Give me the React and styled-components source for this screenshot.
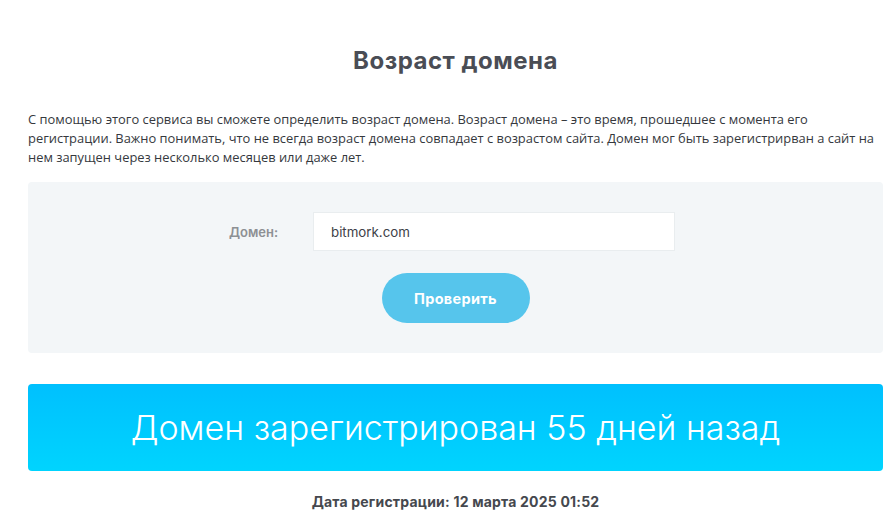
import React from 'react'
import styled, { createGlobalStyle } from 'styled-components'

const GlobalStyle = createGlobalStyle`
  html, body {
    margin: 0;
    padding: 0;
    background: #fff;
  }
  body {
    font-family: 'Open Sans', 'Liberation Sans', sans-serif;
    color: #3c3f45;
  }
`

const Page = styled.div`
  width: 855px;
  padding: 44px 0 0 28px;
`

const Title = styled.h1`
  margin: 0;
  text-align: center;
  font-family: 'Inter', 'DejaVu Sans', sans-serif;
  font-weight: 700;
  font-size: 24px;
  letter-spacing: 0.5px;
  line-height: 34px;
  color: #4a4d55;
`

const Intro = styled.p`
  margin: 32px 0 0;
  font-size: 12.9px;
  line-height: 19px;
  color: #35383d;
`

const Panel = styled.div`
  margin-top: 15px;
  height: 171px;
  box-sizing: border-box;
  padding-top: 30px;
  background: #f3f6f8;
  border-radius: 4px;
  display: flex;
  flex-direction: column;
  align-items: center;
`

const Field = styled.div`
  display: flex;
  align-items: center;
  margin-right: 7px;
`

const Label = styled.label`
  width: 84px;
  font-family: 'Inter', 'DejaVu Sans', sans-serif;
  font-weight: 600;
  font-size: 13px;
  color: #8d9094;
`

const Input = styled.input`
  width: 362px;
  height: 39px;
  box-sizing: border-box;
  border: 1px solid #e9edef;
  background: #fff;
  padding: 0 17px;
  font-family: 'Inter', 'DejaVu Sans', sans-serif;
  font-size: 13.3px;
  color: #3e4148;
  outline: none;
`

const Button = styled.button`
  margin-top: 22px;
  width: 148px;
  height: 50px;
  border: 0;
  border-radius: 25px;
  background: #56c5ec;
  color: #fff;
  font-family: 'Inter', 'DejaVu Sans', sans-serif;
  font-weight: 700;
  font-size: 14.5px;
  letter-spacing: 0.3px;
  cursor: pointer;
`

const Result = styled.div`
  margin-top: 31px;
  height: 87px;
  border-radius: 4px;
  background: linear-gradient(180deg, #00c0fe 0%, #00d4fe 100%);
  display: flex;
  align-items: center;
  justify-content: center;
  color: #fff;
  font-family: 'Inter', 'DejaVu Sans', sans-serif;
  font-weight: 300;
  font-size: 34px;
`

const RegDate = styled.div`
  margin-top: 22px;
  text-align: center;
  font-family: 'Inter', 'DejaVu Sans', sans-serif;
  font-weight: 700;
  font-size: 14px;
  letter-spacing: 0.2px;
  color: #45484e;
`

export default function App() {
  return (
    <>
      <GlobalStyle />
      <Page>
        <Title>Возраст домена</Title>
        <Intro>
          С помощью этого сервиса вы сможете определить возраст домена. Возраст
          домена – это время, прошедшее с момента его регистрации. Важно
          понимать, что не всегда возраст домена совпадает с возрастом сайта.
          Домен мог быть зарегистрирван а сайт на нем запущен через несколько
          месяцев или даже лет.
        </Intro>
        <Panel>
          <Field>
            <Label htmlFor="domain">Домен:</Label>
            <Input id="domain" defaultValue="bitmork.com" />
          </Field>
          <Button>Проверить</Button>
        </Panel>
        <Result>Домен зарегистрирован 55 дней назад</Result>
        <RegDate>Дата регистрации: 12 марта 2025 01:52</RegDate>
      </Page>
    </>
  )
}
